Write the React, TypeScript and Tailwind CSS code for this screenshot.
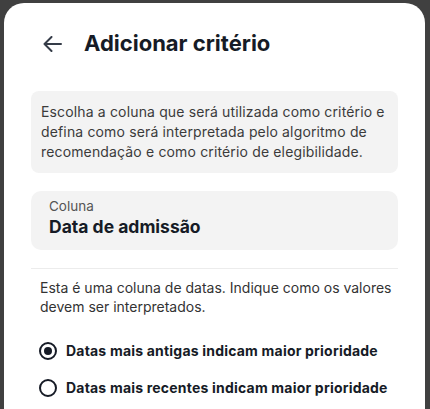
import React from "react";

export default function App() {
  return (
    <div
      className="w-[430px] h-[409px] bg-[#404040] pt-[3px] pl-[4px] pr-[5px] flex flex-col overflow-hidden"
      style={{ fontFamily: "Inter, 'Noto Sans', sans-serif" }}
    >
      <div className="flex-1 bg-white rounded-t-[20px] px-[27px]">
        <div className="flex items-center h-[82px] pl-[12px] pb-[1px]">
          <svg width="19" height="16" viewBox="0 0 19 16" fill="none" className="shrink-0">
            <path d="M18 8H1.5M8.5 1 1.5 8l7 7" stroke="#353c48" strokeWidth="2" strokeLinecap="round" strokeLinejoin="round" />
          </svg>
          <h1 className="ml-[22px] text-[22px] font-bold text-[#161b26]">Adicionar critério</h1>
        </div>
        <div className="mt-[6px] bg-[#f3f3f3] rounded-[8px] pl-[10px] pr-[6px] py-[11px] text-[14px] leading-[20px] text-[#3b3b3b] tracking-[0.15px]">
          Escolha a coluna que será utilizada como critério e<br />
          defina como será interpretada pelo algoritmo de<br />
          recomendação e como critério de elegibilidade.
        </div>
        <div className="mt-[18px] bg-[#f3f3f3] rounded-[10px] pl-[18px] pt-[7px] h-[59px]">
          <div className="text-[13.5px] leading-[17px] text-[#555555]">Coluna</div>
          <div className="text-[17.5px] leading-[23px] font-bold text-[#161b26]">Data de admissão</div>
        </div>
        <div className="mt-[18px] h-px bg-[#ececec]" />
        <p className="mt-[9px] pl-[9px] text-[14px] leading-[19px] text-[#333333]">
          Esta é uma coluna de datas. Indique como os valores<br />
          devem ser interpretados.
        </p>
        <div className="mt-[26px] pl-[8px] flex flex-col gap-[19px]">
          <label className="flex items-center gap-[9px]">
            <span className="w-[18px] h-[18px] rounded-full border-2 border-[#161b26] flex items-center justify-center">
              <span className="w-[8px] h-[8px] rounded-full bg-[#161b26]" />
            </span>
            <span className="text-[14px] leading-[18px] font-bold text-[#161b26] tracking-[0.2px] whitespace-nowrap">Datas mais antigas indicam maior prioridade</span>
          </label>
          <label className="flex items-center gap-[9px]">
            <span className="w-[18px] h-[18px] rounded-full border-2 border-[#161b26]" />
            <span className="text-[14px] leading-[18px] font-bold text-[#161b26] tracking-[0.2px] whitespace-nowrap">Datas mais recentes indicam maior prioridade</span>
          </label>
        </div>
      </div>
    </div>
  );
}
